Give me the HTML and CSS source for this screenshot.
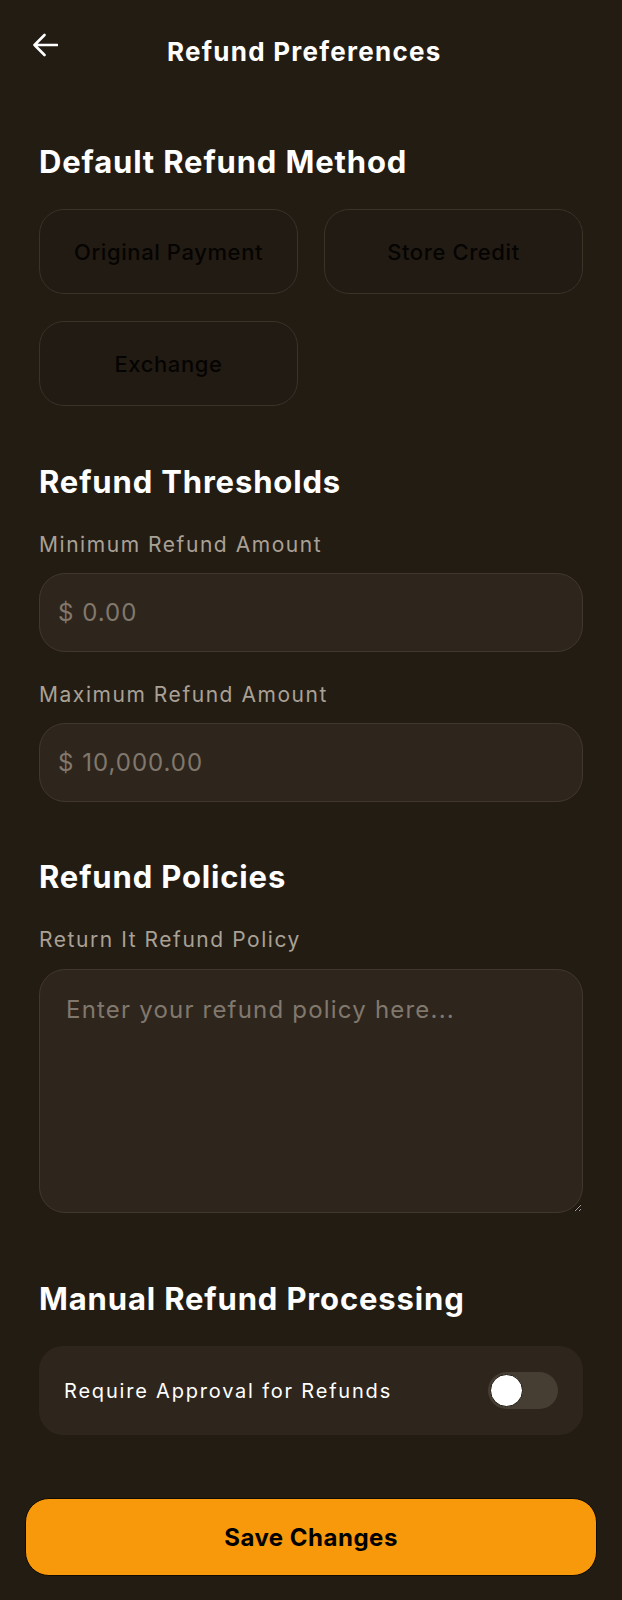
FILE: index.html
```html
<!DOCTYPE html>
<html lang="en">
<head>
<meta charset="utf-8">
<title>Refund Preferences</title>
<link rel="stylesheet" href="styles.css">
</head>
<body>
<div class="screen">
  <header class="topbar">
    <button class="back" aria-label="Back">
      <svg width="26" height="24" viewBox="0 0 26 24" fill="none" stroke="#ffffff" stroke-width="2.6" stroke-linecap="round" stroke-linejoin="round">
        <path d="M25 12H2.5M12.5 2L2.5 12l10 10"/>
      </svg>
    </button>
    <h1 class="title">Refund Preferences</h1>
  </header>

  <main class="content">
    <section class="section">
      <h2 class="heading">Default Refund Method</h2>
      <div class="options">
        <button class="option">Original Payment</button>
        <button class="option">Store Credit</button>
        <button class="option">Exchange</button>
      </div>
    </section>

    <section class="section sec-thresholds">
      <h2 class="heading">Refund Thresholds</h2>
      <label class="label">Minimum Refund Amount</label>
      <input class="field" type="text" placeholder="$ 0.00">
      <label class="label label-2">Maximum Refund Amount</label>
      <input class="field" type="text" placeholder="$ 10,000.00">
    </section>

    <section class="section sec-policies">
      <h2 class="heading">Refund Policies</h2>
      <label class="label">Return It Refund Policy</label>
      <textarea class="area" placeholder="Enter your refund policy here..."></textarea>
    </section>

    <section class="section sec-manual">
      <h2 class="heading">Manual Refund Processing</h2>
      <div class="card">
        <span class="card-text">Require Approval for Refunds</span>
        <div class="switch"><div class="knob"></div></div>
      </div>
    </section>
  </main>

  <footer class="footer">
    <button class="save">Save Changes</button>
  </footer>
</div>
</body>
</html>
```

FILE: styles.css
```css
* { box-sizing: border-box; }

html, body {
  margin: 0;
  padding: 0;
  background: #231c13;
}

body {
  font-family: Inter, "Noto Sans", sans-serif;
  color: #ffffff;
}

.screen {
  width: 622px;
  min-height: 1600px;
  display: flex;
  flex-direction: column;
}

.topbar {
  display: flex;
  align-items: flex-start;
  padding: 33px 0 0 32px;
  height: 144px;
}

.back {
  background: none;
  border: 0;
  padding: 0;
  width: 26px;
  height: 24px;
  display: flex;
}

.title {
  margin: 4px 0 0 109px;
  font-size: 26px;
  line-height: 30px;
  font-weight: 700;
  letter-spacing: 1.25px;
  color: #ffffff;
}

.content {
  padding: 0 39px 0 39px;
  display: flex;
  flex-direction: column;
}

.heading {
  margin: 0;
  font-size: 31px;
  line-height: 36px;
  font-weight: 700;
  letter-spacing: 0.85px;
  color: #ffffff;
}

.options {
  margin-top: 29px;
  display: grid;
  grid-template-columns: 1fr 1fr;
  column-gap: 26px;
  row-gap: 27px;
}

.option {
  height: 85px;
  border-radius: 25px;
  border: 1.5px solid #3b3228;
  background: #221b13;
  color: #050402;
  font-family: Inter, sans-serif;
  font-size: 22px;
  font-weight: 500;
  letter-spacing: 0.6px;
}

.sec-thresholds { margin-top: 58px; }
.sec-policies { margin-top: 57px; }
.sec-manual { margin-top: 68px; }

.label {
  display: block;
  margin-top: 31px;
  font-size: 21px;
  line-height: 28px;
  color: #aaa196;
  letter-spacing: 1.55px;
}

.label-2 { margin-top: 29px; }

.field {
  display: block;
  width: 100%;
  margin-top: 14px;
  height: 79px;
  border-radius: 26px;
  border: 1.5px solid #41382d;
  background: #2e261d;
  padding: 0 0 0 18px;
  font-family: Inter, sans-serif;
  font-size: 24px;
  letter-spacing: 1px;
  color: #ffffff;
  outline: none;
}

.field::placeholder { color: #81786d; }

.area {
  display: block;
  width: 100%;
  height: 244px;
  margin-top: 15px;
  border-radius: 26px;
  border: 1.5px solid #41382d;
  background: #2e261d;
  padding: 25px 26px;
  font-family: Inter, sans-serif;
  font-size: 24px;
  line-height: 30px;
  letter-spacing: 1.2px;
  color: #ffffff;
  outline: none;
  resize: vertical;
}

.area::placeholder { color: #81786d; }

.card {
  margin-top: 29px;
  height: 89px;
  border-radius: 24px;
  background: #2e261d;
  display: flex;
  align-items: center;
  justify-content: space-between;
  padding: 0 25px 0 25px;
}

.card-text {
  font-size: 20px;
  color: #ffffff;
  letter-spacing: 1.8px;
}

.switch {
  width: 70px;
  height: 37px;
  border-radius: 19px;
  background: #463d33;
  padding: 2px;
  display: flex;
  align-items: center;
}

.knob {
  width: 33px;
  height: 33px;
  border-radius: 50%;
  background: #ffffff;
  border: 1.5px solid #1c160f;
}

.footer {
  padding: 63px 25px 25px;
}

.save {
  width: 100%;
  height: 78px;
  border-radius: 24px;
  border: 1.5px solid #0e0a05;
  background: #f7990a;
  color: #000000;
  font-family: Inter, sans-serif;
  font-size: 24px;
  font-weight: 700;
  letter-spacing: 0.5px;
}
```
